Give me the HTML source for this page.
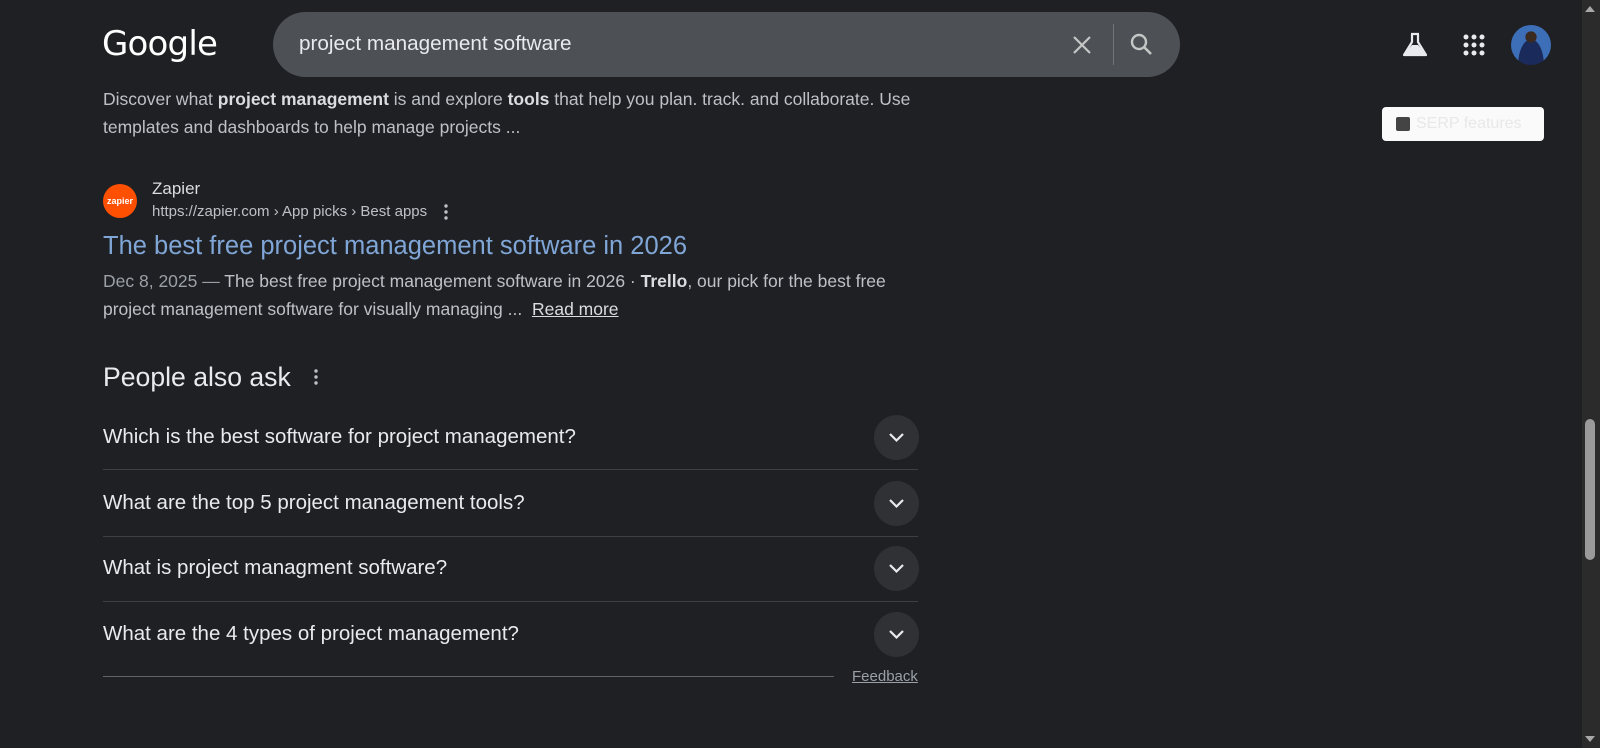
<!DOCTYPE html>
<html><head><meta charset="utf-8"><style>
*{margin:0;padding:0;box-sizing:border-box}
body{width:1600px;height:748px;background:#1f2024;font-family:"Liberation Sans",Arial,sans-serif;color:#bdc1c6;position:relative;overflow:hidden}
.abs{position:absolute;white-space:nowrap}
.logo{left:102px;top:22px;font-size:34px;line-height:44px;color:#fff;letter-spacing:-0.8px;font-family:"DejaVu Sans","Liberation Sans",sans-serif}
.search{left:273px;top:12px;width:907px;height:65px;background:#4d5156;border-radius:33px}
.q{left:299px;top:32px;font-size:20.7px;line-height:24px;color:#e8eaed}
.snip{left:103px;font-size:17.5px;line-height:28px;color:#bdc1c6}
.snip b{color:#dadce0}
.paaq{left:103px;font-size:20.5px;line-height:24px;height:24px;color:#e8eaed}
.chev{width:45px;height:45px;border-radius:50%;background:#303134;left:874px}
.chev svg{position:absolute;left:13px;top:13px}
.hr{left:103px;width:815px;height:1px;background:#3c4043}
</style></head><body>
<div class="abs logo">Google</div>
<div class="abs search"></div>
<div class="abs q">project management software</div>
<svg class="abs" style="left:1071px;top:34px" width="22" height="22" viewBox="0 0 22 22"><path d="M3 3L19 19M19 3L3 19" stroke="#c4c7c5" stroke-width="2.2"/></svg>
<div class="abs" style="left:1113px;top:24px;width:1px;height:41px;background:#70757a"></div>
<svg class="abs" style="left:1129px;top:32px" width="26" height="26" viewBox="0 0 26 26"><circle cx="10" cy="10" r="7" fill="none" stroke="#c4c7c5" stroke-width="2.4"/><path d="M15 15L22 22" stroke="#c4c7c5" stroke-width="2.6"/></svg>
<svg class="abs" style="left:1401px;top:31px" width="28" height="28" viewBox="0 0 28 28"><path d="M10 3h8M11 3v8L3 24h22L17 11V3" fill="none" stroke="#e8eaed" stroke-width="2.2" stroke-linejoin="round"/><path d="M6 20l5-6h6l5 6 2 4H4z" fill="#e8eaed"/></svg>
<svg class="abs" style="left:1462px;top:33px" width="24" height="24" viewBox="0 0 24 24" fill="#e8eaed"><circle cx="4" cy="4" r="2.5"/><circle cx="12" cy="4" r="2.5"/><circle cx="20" cy="4" r="2.5"/><circle cx="4" cy="12" r="2.5"/><circle cx="12" cy="12" r="2.5"/><circle cx="20" cy="12" r="2.5"/><circle cx="4" cy="20" r="2.5"/><circle cx="12" cy="20" r="2.5"/><circle cx="20" cy="20" r="2.5"/></svg>
<div class="abs" style="left:1511px;top:25px;width:40px;height:40px;border-radius:50%;background:radial-gradient(circle at 50% 30%,#3a2a22 0 16%,transparent 17%),radial-gradient(ellipse at 50% 100%,#1a2a5a 0 45%,transparent 46%),#3d6fb8"></div>
<div class="abs" style="left:1382px;top:107px;width:162px;height:34px;background:#fafafa;border-radius:4px"></div>
<div class="abs" style="left:1396px;top:117px;width:14px;height:14px;background:#444;border-radius:2px"></div>
<div class="abs" style="left:1416px;top:115px;font-size:16px;color:#e8e8e8">SERP features</div>
<div class="abs" style="left:1582px;top:0;width:18px;height:748px;background:#2b2b2b"></div>
<div class="abs" style="left:1585px;top:419px;width:10px;height:141px;background:#9a9a9a;border-radius:5px"></div>
<div class="abs" style="left:1585px;top:6px;width:0;height:0;border-left:5px solid transparent;border-right:5px solid transparent;border-bottom:6px solid #a8a8a8"></div>
<div class="abs" style="left:1585px;top:736px;width:0;height:0;border-left:5px solid transparent;border-right:5px solid transparent;border-top:6px solid #a8a8a8"></div>

<div class="abs snip" style="top:85px">Discover what <b>project management</b> is and explore <b>tools</b> that help you plan. track. and collaborate. Use<br>templates and dashboards to help manage projects ...</div>

<div class="abs" style="left:103px;top:184px;width:34px;height:34px;border-radius:50%;background:#ff4f00;color:#fff;font-size:9px;font-weight:bold;text-align:center;line-height:34px">zapier</div>
<div class="abs" style="left:152px;top:179px;font-size:17px;line-height:20px;color:#dadce0">Zapier</div>
<div class="abs" style="left:152px;top:203px;font-size:15px;line-height:18px;color:#bdc1c6">https://zapier.com › App picks › Best apps</div>
<svg class="abs" style="left:442px;top:203px" width="8" height="18"><circle cx="4" cy="3" r="1.7" fill="#bdc1c6"/><circle cx="4" cy="9" r="1.7" fill="#bdc1c6"/><circle cx="4" cy="15" r="1.7" fill="#bdc1c6"/></svg>
<div class="abs" style="left:103px;top:231px;font-size:25.5px;line-height:30px;color:#7fa6d6">The best free project management software in 2026</div>
<div class="abs snip" style="top:267px"><span style="color:#9aa0a6">Dec 8, 2025 —</span> The best free project management software in 2026 · <b>Trello</b>, our pick for the best free<br>project management software for visually managing ... &nbsp;<u style="color:#dadce0">Read more</u></div>

<div class="abs" style="left:103px;top:361px;font-size:26.6px;line-height:32px;color:#e8eaed">People also ask</div>
<svg class="abs" style="left:312px;top:368px" width="8" height="18"><circle cx="4" cy="3" r="1.7" fill="#bdc1c6"/><circle cx="4" cy="9" r="1.7" fill="#bdc1c6"/><circle cx="4" cy="15" r="1.7" fill="#bdc1c6"/></svg>

<div class="abs paaq" style="top:425px">Which is the best software for project management?</div>
<div class="abs chev" style="top:415px"><svg width="19" height="19"><path d="M3 6l6.5 6.5L16 6" fill="none" stroke="#e8eaed" stroke-width="2.2"/></svg></div>
<div class="abs hr" style="top:469px"></div>
<div class="abs paaq" style="top:491px">What are the top 5 project management tools?</div>
<div class="abs chev" style="top:481px"><svg width="19" height="19"><path d="M3 6l6.5 6.5L16 6" fill="none" stroke="#e8eaed" stroke-width="2.2"/></svg></div>
<div class="abs hr" style="top:536px"></div>
<div class="abs paaq" style="top:556px">What is project managment software?</div>
<div class="abs chev" style="top:546px"><svg width="19" height="19"><path d="M3 6l6.5 6.5L16 6" fill="none" stroke="#e8eaed" stroke-width="2.2"/></svg></div>
<div class="abs hr" style="top:601px"></div>
<div class="abs paaq" style="top:622px">What are the 4 types of project management?</div>
<div class="abs chev" style="top:612px"><svg width="19" height="19"><path d="M3 6l6.5 6.5L16 6" fill="none" stroke="#e8eaed" stroke-width="2.2"/></svg></div>
<div class="abs" style="left:103px;top:676px;width:731px;height:1px;background:#5f6368"></div>
<div class="abs" style="left:852px;top:668px;font-size:15px;line-height:18px;color:#9aa0a6;text-decoration:underline">Feedback</div>
</body></html>
